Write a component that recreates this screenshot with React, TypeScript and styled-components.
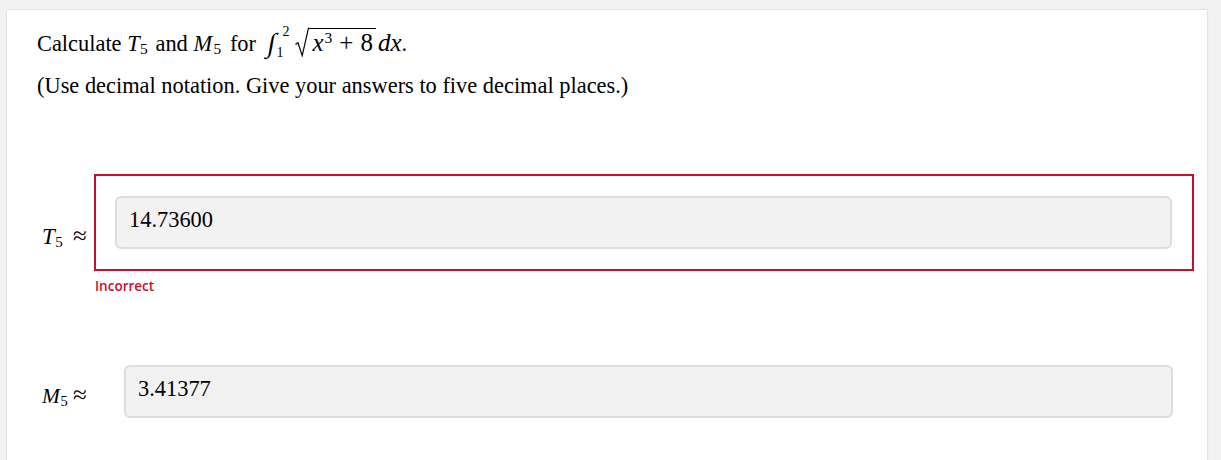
import React from "react";
import styled, { createGlobalStyle } from "styled-components";

const GlobalStyle = createGlobalStyle`
  html, body { margin: 0; padding: 0; background: #f2f2f2; }
  body { font-family: "Liberation Serif", "Times New Roman", serif; color: #000; }
`;

const Page = styled.div`
  width: 1221px;
  height: 460px;
  overflow: hidden;
  padding: 10px 0 0 7px;
  box-sizing: border-box;
`;

const Card = styled.div`
  width: 1200px;
  min-height: 460px;
  background: #fff;
  box-shadow: 0 0 2px rgba(0, 0, 0, 0.18);
  box-sizing: border-box;
  padding: 16.6px 13px 0 30px;
`;

const Para = styled.p<{ $gap?: number }>`
  margin: 0 0 ${(p) => p.$gap ?? 0}px 0;
  font-size: 22.4px;
  line-height: 30px;
  white-space: nowrap;
`;

const Var = styled.i<{ $after?: number }>`
  font-style: italic;
  margin-right: ${(p) => p.$after ?? 0}px;
`;

const Sub = styled.span<{ $after?: number; $size?: number }>`
  font-size: ${(p) => p.$size ?? 15.5}px;
  line-height: 0;
  position: relative;
  top: 3px;
  margin-left: 0.5px;
  margin-right: ${(p) => p.$after ?? 0}px;
`;

const Sup = styled.span`
  font-size: 15.5px;
  line-height: 0;
  position: relative;
  top: -8px;
  margin-left: 1px;
`;

const IntSign = styled.span`
  display: inline-block;
  font-size: 27px;
  line-height: 0;
  margin-left: 12px;
  transform: skewX(-10deg);
  position: relative;
  top: 1px;
`;

const Limits = styled.span`
  display: inline-flex;
  flex-direction: column;
  vertical-align: 15px;
  font-size: 14px;
  line-height: 21px;
  margin: -9px 0 -6px 1px;
`;

const Upper = styled.span`
  margin-left: 6px;
`;

const Lower = styled.span`
  margin-left: 0;
`;

const Radical = styled.svg`
  display: inline-block;
  vertical-align: -6px;
  margin-left: 6px;
`;

const Radicand = styled.span`
  display: inline-block;
  font-size: 25px;
  line-height: 24px;
  border-top: 1.2px solid #000;
  padding: 2px 3px 0 3px;
  margin-top: -2px;
`;

const Op = styled.span`
  margin: 0 7px;
`;

const Diff = styled.i`
  font-style: italic;
  font-size: 25px;
  margin-left: 2px;
`;

const Rows = styled.div`
  margin-top: 73.6px;
  display: flex;
  flex-direction: column;
`;

const Row = styled.div`
  display: flex;
  align-items: flex-start;
`;

const Label = styled.div<{ $width: number; $top: number; $size: number }>`
  flex: 0 0 ${(p) => p.$width}px;
  box-sizing: border-box;
  padding-left: 5px;
  margin-top: ${(p) => p.$top}px;
  display: flex;
  align-items: baseline;
  font-size: ${(p) => p.$size}px;
  line-height: 30px;
  white-space: nowrap;
`;

const Ident = styled.span`
  flex: 0 0 31px;
`;

const Approx = styled.span`
  font-size: 25px;
`;

const FieldArea = styled.div`
  flex: 1;
  display: flex;
  flex-direction: column;
`;

const ErrorBox = styled.div`
  border: 2px solid #c8102e;
  padding: 20px 20px 20px 19px;
`;

const AnswerInput = styled.div`
  height: 53px;
  box-sizing: border-box;
  border: 2px solid #dddddd;
  border-radius: 6px;
  background: #f2f2f2;
  padding: 7px 12px 0 12px;
  font-size: 22.4px;
  line-height: 30px;
`;

const PlainField = styled.div`
  flex: 1;
  margin-right: 21px;
`;

const Feedback = styled.div`
  margin-top: 4.6px;
  font-family: "Open Sans", "Liberation Sans", sans-serif;
  font-size: 13.5px;
  font-weight: 600;
  line-height: 20px;
  color: #c8102e;
  padding-left: 1px;
`;

const Spacer = styled.div`
  height: 69px;
`;

export default function App() {
  return (
    <>
      <GlobalStyle />
      <Page>
        <Card>
          <Para $gap={12}>
            Calculate <Var>T</Var>
            <Sub $after={2}>5</Sub> and <Var $after={1}>M</Var>
            <Sub $after={3}>5</Sub> for
            <IntSign>∫</IntSign>
            <Limits>
              <Upper>2</Upper>
              <Lower>1</Lower>
            </Limits>
            <Radical width="14" height="30" viewBox="0 0 14 30" aria-hidden="true">
              <path
                d="M0.5 17.5 L3 15.8 L7.2 28.6 L13.6 0.6"
                fill="none"
                stroke="#000"
                strokeWidth="1.2"
                strokeLinejoin="miter"
              />
            </Radical>
            <Radicand>
              <Var>x</Var>
              <Sup>3</Sup>
              <Op>+</Op>8
            </Radicand>
            <Diff>dx</Diff>.
          </Para>
          <Para>(Use decimal notation. Give your answers to five decimal places.)</Para>
          <Rows>
            <Row>
              <Label $width={57} $top={46.6} $size={23}>
                <Ident>
                  <Var>T</Var>
                  <Sub $size={15}>5</Sub>
                </Ident>
                <Approx>≈</Approx>
              </Label>
              <FieldArea>
                <ErrorBox>
                  <AnswerInput>14.73600</AnswerInput>
                </ErrorBox>
                <Feedback>Incorrect</Feedback>
              </FieldArea>
            </Row>
            <Spacer />
            <Row>
              <Label $width={87} $top={15} $size={21.5}>
                <Ident>
                  <Var>M</Var>
                  <Sub $size={14.5}>5</Sub>
                </Ident>
                <Approx>≈</Approx>
              </Label>
              <PlainField>
                <AnswerInput>3.41377</AnswerInput>
              </PlainField>
            </Row>
          </Rows>
        </Card>
      </Page>
    </>
  );
}
